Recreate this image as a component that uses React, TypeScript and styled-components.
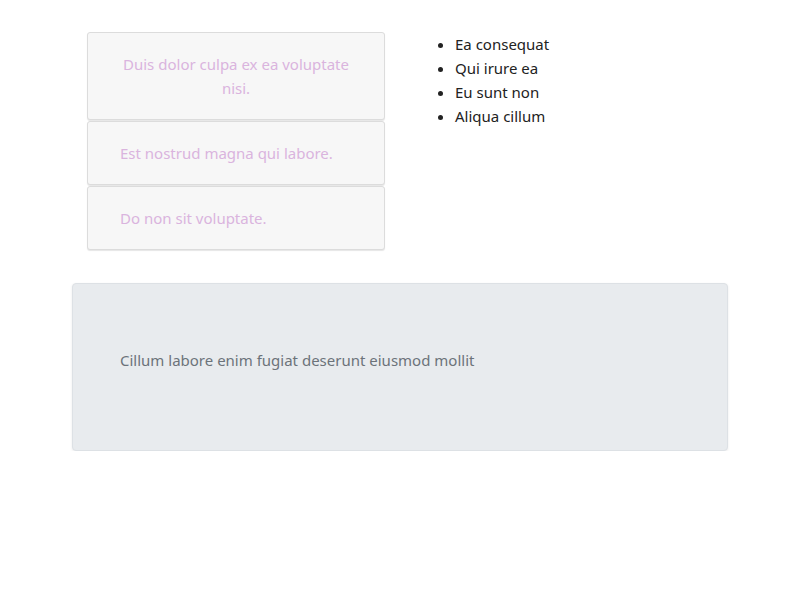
import React from "react";
import styled, { createGlobalStyle } from "styled-components";

const Global = createGlobalStyle`
  html, body { margin: 0; padding: 0; background: #fff; }
  body { font-family: "Noto Sans", "Open Sans", sans-serif; font-size: 15px; line-height: 24px; }
`;

const Page = styled.div`
  width: 656px;
  margin: 0 auto;
  padding-top: 32px;
`;

const TopRow = styled.div`
  display: flex;
  gap: 30px;
  padding: 0 15px;
`;

const CardStack = styled.div`
  width: 298px;
  display: flex;
  flex-direction: column;
  gap: 1px;
`;

const Card = styled.div<{ $center?: boolean }>`
  background: #f7f7f7;
  border: 1px solid #dcdcdc;
  border-radius: 3px;
  box-shadow: 0 1px 1px rgba(0, 0, 0, 0.1);
  padding: 19px 32px;
  color: #dab4de;
  text-align: ${(p) => (p.$center ? "center" : "left")};
`;

const List = styled.ul`
  margin: 0;
  padding-left: 40px;
  color: #222;
`;

const Panel = styled.div`
  margin-top: 33px;
  height: 168px;
  box-sizing: border-box;
  background: #e8ebee;
  border: 1px solid #dde1e5;
  border-radius: 4px;
  box-shadow: 0 1px 3px rgba(0, 0, 0, 0.08);
  padding: 64px 47px 0;
  color: #6c737a;
`;

export default function App() {
  return (
    <>
      <Global />
      <Page>
        <TopRow>
          <CardStack>
            <Card $center>Duis dolor culpa ex ea voluptate nisi.</Card>
            <Card>Est nostrud magna qui labore.</Card>
            <Card>Do non sit voluptate.</Card>
          </CardStack>
          <List>
            <li>Ea consequat</li>
            <li>Qui irure ea</li>
            <li>Eu sunt non</li>
            <li>Aliqua cillum</li>
          </List>
        </TopRow>
        <Panel>Cillum labore enim fugiat deserunt eiusmod mollit</Panel>
      </Page>
    </>
  );
}
